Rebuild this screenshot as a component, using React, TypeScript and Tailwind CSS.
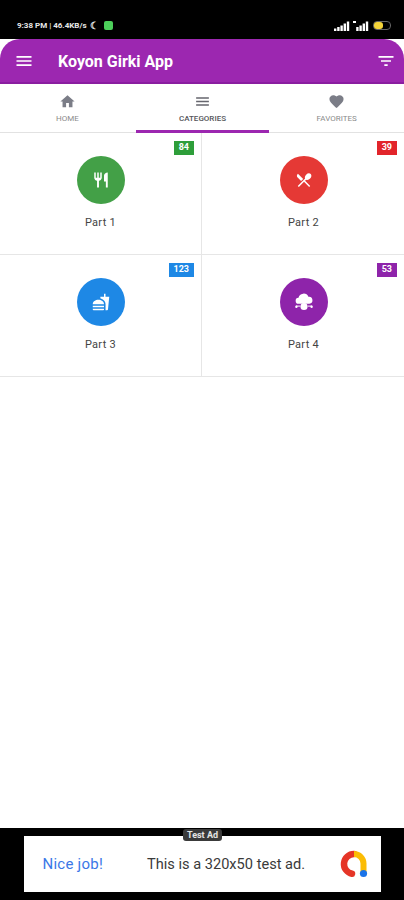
import { MdFastfood, MdFavorite, MdFilterList, MdHome, MdMenu, MdRestaurant, MdRestaurantMenu } from "react-icons/md"

function CloudNodes() {
  return (
    <svg width="20" height="20" viewBox="0 0 20 20" fill="white">
      <path d="M4.8 11.8a3 3 0 0 1-.3-6 5.2 5.2 0 0 1 9.9-1 3.5 3.5 0 0 1 1 7z" />
      <circle cx="10" cy="14.5" r="3.6" />
      <rect x="2" y="13.6" width="4" height="1" />
      <rect x="14" y="13.6" width="4" height="1" />
      <circle cx="2.4" cy="14.8" r="1.2" />
      <circle cx="17.6" cy="14.8" r="1.2" />
    </svg>
  )
}

function Signal({ gap }: { gap?: boolean }) {
  return (
    <svg width="16" height="10" viewBox="0 0 16 10" fill="white">
      {gap ? <rect x="0" y="0" width="3" height="2" /> : <rect x="0" y="7.5" width="2.4" height="2.5" />}
      <rect x="3.2" y="6" width="2.4" height="4" />
      <rect x="6.4" y="4.5" width="2.4" height="5.5" />
      <rect x="9.6" y="2.5" width="2.4" height="7.5" />
      <rect x="12.8" y="0.5" width="2.4" height="9.5" />
    </svg>
  )
}

function AdLogo() {
  return (
    <svg width="28" height="28" viewBox="0 0 28 28" fill="none">
      <path d="M12 23.8 A10 10 0 0 1 14 4" stroke="#e53527" strokeWidth="6.5" strokeLinecap="round" />
      <path d="M14 4 A9.5 9.5 0 0 1 23.5 13.5 V22" stroke="#fbbc05" strokeWidth="6" />
      <circle cx="23.5" cy="23.5" r="3.6" fill="#1a73e8" />
    </svg>
  )
}

const cards = [
  { name: "Part 1", count: "84", bg: "bg-[#43a047]", badge: "bg-[#2e9e3a]", icon: <MdRestaurant size={18} color="white" />, cell: "border-r" },
  { name: "Part 2", count: "39", bg: "bg-[#e53935]", badge: "bg-[#e2252b]", icon: <MdRestaurantMenu size={18} color="white" />, cell: "pl-[1px]" },
  { name: "Part 3", count: "123", bg: "bg-[#1e88e5]", badge: "bg-[#1e88e5]", icon: <MdFastfood size={18} color="white" />, cell: "border-r" },
  { name: "Part 4", count: "53", bg: "bg-[#8e24aa]", badge: "bg-[#8e24aa]", icon: <CloudNodes />, cell: "pl-[1px]" },
]

export default function App() {
  return (
    <div className="w-[404px] h-[900px] bg-white flex flex-col overflow-hidden font-['Roboto',sans-serif]">
      <div className="h-[39px] bg-black text-white flex items-center justify-between pl-[17px] pr-[13px] pt-[12px] shrink-0">
        <div className="flex items-center text-[8px] font-bold leading-none text-[#e8e8e8]">
          <span>9:38 PM | 46.4KB/s</span>
          <span className="ml-[3px] text-[10px]">☾</span>
          <span className="w-[9px] h-[9px] rounded-[2px] bg-[#4ccf5a] ml-[5px]" />
        </div>
        <div className="flex items-center gap-[3px]">
          <Signal />
          <Signal gap />
          <div className="w-[18px] h-[9px] rounded-[4px] border border-[#666] flex items-center ml-[1px]">
            <div className="w-[9px] h-[7px] rounded-[3px] bg-[#f4d43a]" />
          </div>
        </div>
      </div>

      <div className="h-[45px] bg-[#9c27b0] border-b-2 border-[#8a1ea0] rounded-t-[20px] flex items-center pl-[14px] pr-[8px] pt-[2px] shrink-0">
        <MdMenu size={20} color="white" className="-mt-[2px]" />
        <span className="ml-[24px] text-white text-[16px] font-bold">Koyon Girki App</span>
        <MdFilterList size={20} color="white" className="ml-auto -mt-[2px]" />
      </div>

      <div className="h-[49px] grid grid-cols-3 border-b border-[#e2e2e2] shrink-0">
        <div className="flex flex-col items-center pt-[9px]">
          <MdHome size={17} color="#7b7d87" />
          <span className="text-[8px] text-[#8b8b8b] mt-[3px]">HOME</span>
        </div>
        <div className="flex flex-col items-center pt-[9px] border-b-[3px] border-[#9c27b0] mb-[-1px] ml-[1px]">
          <MdMenu size={17} color="#66666e" />
          <span className="text-[8px] font-medium text-[#55555a] mt-[3px]">CATEGORIES</span>
        </div>
        <div className="flex flex-col items-center pt-[9px]">
          <MdFavorite size={17} color="#7b7d87" />
          <span className="text-[8px] text-[#8b8b8b] mt-[3px]">FAVORITES</span>
        </div>
      </div>

      <div className="grid grid-cols-2 auto-rows-[122px] shrink-0">
        {cards.map((card) => (
          <div key={card.name} className={`relative flex flex-col items-center pt-[23px] border-b border-[#e6e6e6] ${card.cell}`}>
            <div className={`absolute top-[8px] right-[7px] h-[14px] px-[5px] flex items-center text-white text-[9px] font-bold ${card.badge}`}>{card.count}</div>
            <div className={`w-[48px] h-[48px] rounded-full flex items-center justify-center ${card.bg}`}>{card.icon}</div>
            <span className="mt-[11px] text-[11px] tracking-[0.3px] text-[#444]">{card.name}</span>
          </div>
        ))}
      </div>

      <div className="flex-1" />

      <div className="h-[72px] bg-black shrink-0 relative pt-[8px] flex justify-center">
        <div className="absolute top-[1px] left-[183px] h-[12px] w-[39px] rounded-[3px] bg-[#3a3a3a] text-[#e5e5e5] text-[9px] font-bold flex items-center justify-center leading-none">Test Ad</div>
        <div className="w-[357px] h-[56px] bg-white flex items-center pl-[19px] pr-[13px] pt-[1px]">
          <span className="text-[#3b78e7] text-[15px] tracking-[0.25px]">Nice job!</span>
          <span className="ml-[44px] text-[#3a3a3a] text-[14.6px] whitespace-nowrap">This is a 320x50 test ad.</span>
          <span className="ml-auto -mt-[1px]"><AdLogo /></span>
        </div>
      </div>
    </div>
  )
}
